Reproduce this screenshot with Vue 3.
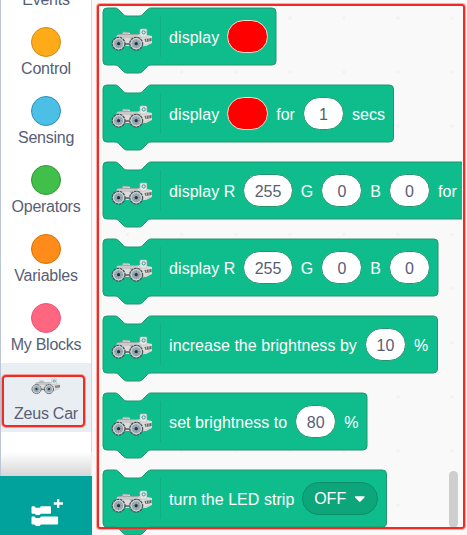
<script setup>
import { h } from 'vue'

const categories = [
  { name: 'Events', color: '#ffbf00', edge: '#cc9900' },
  { name: 'Control', color: '#ffab19', edge: '#cf8b17' },
  { name: 'Sensing', color: '#4cbfe6', edge: '#2e8eb8' },
  { name: 'Operators', color: '#40bf4a', edge: '#389438' },
  { name: 'Variables', color: '#ff8c1a', edge: '#db6e00' },
  { name: 'My Blocks', color: '#ff6680', edge: '#f0527a' },
]

const text = (value) => ({ type: 'text', value })
const num = (value) => ({ type: 'num', value })
const color = { type: 'color' }

const blocks = [
  { width: 173, parts: [text('display'), color] },
  { width: 290.5, parts: [text('display'), color, text('for'), num('1'), text('secs')] },
  { width: 480, parts: [text('display R'), num('255'), text('G'), num('0'), text('B'), num('0'), text('for')] },
  { width: 335, parts: [text('display R'), num('255'), text('G'), num('0'), text('B'), num('0')] },
  { width: 334.5, parts: [text('increase the brightness by'), num('10'), text('%')] },
  { width: 264, parts: [text('set brightness to'), num('80'), text('%')] },
  { width: 283.5, parts: [text('turn the LED strip'), { type: 'menu', value: 'OFF' }] },
]

const outline = (w) =>
  `M0 4A4 4 0 0 1 4 0H12c2 0 3 1 4 2l4 4c1 1 2 2 4 2h12c2 0 3-1 4-2l4-4c1-1 2-2 4-2H${w - 4}a4 4 0 0 1 4 4V53a4 4 0 0 1-4 4H48c-2 0-3 1-4 2l-4 4c-1 1-2 2-4 2H24c-2 0-3-1-4-2l-4-4c-1-1-2-2-4-2H4a4 4 0 0 1-4-4Z`

const wheel = (cx) => [
  h('circle', { cx, cy: 15.7, r: 6.4, fill: '#a9b8be', stroke: '#4c5554', 'stroke-width': 1.3, 'stroke-dasharray': '2.6 0.8' }),
  h('circle', { cx, cy: 15.7, r: 5.1, fill: '#9dafb8', stroke: '#d3dade', 'stroke-width': 1 }),
  h('path', { d: `M${cx - 4} 15.7h8M${cx} 11.7v8M${cx - 3} 12.7l6 6M${cx + 3} 12.7l-6 6`, stroke: '#7b8e99', 'stroke-width': 0.7 }),
  h('circle', { cx, cy: 15.7, r: 1.6, fill: '#29333a' }),
]

const Car = () =>
  h('svg', { viewBox: '0 0 42 24', fill: 'none' }, [
    h('path', { d: 'M6 7l6-1v-2h5l2 1v2l10-1V2l6-1 1 6 5 1v7l-6 3H9L5 12Z', fill: '#dedcdb' }),
    h('path', { d: 'M6 7l11-1 10 1v3H6ZM12 4h5l1 3h-7Z', fill: '#c9c9ca' }),
    h('path', { d: 'M7 6.5h21M12 4l6 .5M19 10h11', stroke: '#989c9e', 'stroke-width': 0.7 }),
    h('rect', { x: 29, y: 1, width: 6.8, height: 8, rx: 1, fill: '#e4e8e7', stroke: '#b4bcbb', 'stroke-width': 0.6 }),
    h('circle', { cx: 32.7, cy: 4.4, r: 1.6, fill: '#d7f1f5', stroke: '#438f9c', 'stroke-width': 1 }),
    h('path', { d: 'M33.5 11l7-1v3l-6 1Z', fill: '#686664' }),
    h('path', { d: 'M35.5 10.5v3M38 10v3M32 18l7-3', stroke: '#d2cfca', 'stroke-width': 0.8 }),
    h('path', { d: 'M13 16h7', stroke: '#777b7b', 'stroke-width': 2 }),
    ...wheel(7.6),
    ...wheel(25.2),
  ])
</script>

<template>
  <div class="editor">
    <aside class="sidebar">
      <nav class="categories">
        <div v-for="c in categories" :key="c.name" class="category">
          <span class="bubble" :style="{ background: c.color, borderColor: c.edge }"></span>
          <span class="label">{{ c.name }}</span>
        </div>
        <div class="category selected">
          <Car class="category-car" />
          <span class="label">Zeus Car</span>
        </div>
      </nav>
      <div class="fade"></div>
      <button class="extensions" aria-label="Add extension">
        <svg width="34" height="30" viewBox="0 0 34 30" fill="#fff">
          <path d="M1.5 8.2q0-1 1-1h2l1.2 1.6h4l1.2-1.6H20q1 0 1 1v5.5q0 1-1 1h-9.2l-1.5 1.3H6.2l-1.5-1.3H2.5q-1 0-1-1Z" />
          <path d="M1.5 18.5q0-1 1-1h2l1.3 1.4h4l1.3-1.4h16q1 0 1 1v6q0 1-1 1H11L9.5 27H6l-1.5-1.5h-2q-1 0-1-1Z" />
          <path d="M27 0h2.3v3.3H33v2.5h-3.7V9H27V5.8h-3.2V3.3H27Z" />
        </svg>
      </button>
      <div class="mark mark-category"></div>
    </aside>

    <main class="flyout">
      <div v-for="(b, i) in blocks" :key="i" class="block" :style="{ width: b.width + 'px' }">
        <svg class="shape" :width="b.width" height="66">
          <path :d="outline(b.width)" />
        </svg>
        <div class="content">
          <Car class="block-car" />
          <span class="divider"></span>
          <template v-for="(p, j) in b.parts" :key="j">
            <span v-if="p.type === 'text'" class="word">{{ p.value }}</span>
            <span v-else-if="p.type === 'color'" class="pill color"></span>
            <span v-else-if="p.type === 'num'" class="pill num" :class="{ wide: p.value.length > 2 }">{{ p.value }}</span>
            <span v-else class="pill menu">
              {{ p.value }}
              <svg width="12" height="8" viewBox="0 0 12 8"><path d="M1.7 1.2h8.2q1.4 0 .5 1.2L6.8 6.2q-1 1-2 0L1.2 2.4Q.3 1.2 1.7 1.2Z" fill="#fff" /></svg>
            </span>
          </template>
        </div>
      </div>
    </main>
    <div class="scrollbar"></div>
    <div class="mark mark-flyout"></div>
  </div>
</template>

<style>
body {
  margin: 0;
  overflow: hidden;
}
</style>

<style scoped>
.editor {
  position: relative;
  display: flex;
  width: 467px;
  height: 535px;
  overflow: hidden;
  box-sizing: border-box;
  background: #f9f9f9;
  font: 16px/20px "Liberation Sans", Arial, sans-serif;
}
.sidebar {
  position: relative;
  display: flex;
  flex-direction: column;
  flex: none;
  width: 92px;
  height: 535px;
  background: #fff;
}
.categories {
  display: flex;
  flex-direction: column;
  height: 452px;
  border-left: 1px solid #bec5d5;
  border-right: 1px solid #d5d7db;
  justify-content: flex-end;
  box-sizing: border-box;
  padding-bottom: 20px;
}
.category {
  display: flex;
  flex: none;
  flex-direction: column;
  align-items: center;
  height: 69px;
  padding-top: 9px;
  box-sizing: border-box;
}
.bubble {
  width: 30px;
  height: 30px;
  border: 1px solid;
  border-radius: 50%;
  box-sizing: border-box;
}
.label {
  margin-top: 2px;
  color: #575e75;
  letter-spacing: -0.25px;
  white-space: nowrap;
}
.selected {
  background: #e9eef2;
}
.category-car {
  width: 30px;
  height: 17px;
  margin: 6px 0 7px;
}
.fade {
  height: 24px;
  border-left: 1px solid #bec5d5;
  border-right: 1px solid #eee;
  background: linear-gradient(#fff, #d6d6d6);
}
.extensions {
  display: flex;
  flex: 1;
  align-items: flex-start;
  justify-content: center;
  padding: 23px 0 0 1px;
  border: 0;
  background: #00a29b;
}
.flyout {
  display: flex;
  flex: none;
  flex-direction: column;
  gap: 20px;
  width: 370px;
  height: 535px;
  padding: 8px 0 0 11px;
  overflow: hidden;
  box-sizing: border-box;
  background-image: radial-gradient(circle, #f1f1f1 1.2px, transparent 1.7px);
  background-size: 54.1px 54.1px;
  background-position: 8.5px -9px;
}
.block {
  position: relative;
  flex: none;
  height: 57px;
}
.shape {
  position: absolute;
  inset: 0 auto auto 0;
  overflow: visible;
}
.shape path {
  fill: #0fbd8c;
  stroke: #25946f;
  stroke-width: 1;
}
.content {
  position: relative;
  display: flex;
  align-items: center;
  height: 57px;
  padding-left: 8px;
  gap: 8.1px;
}
.block-car {
  flex: none;
  width: 42px;
  height: 24px;
  margin-top: 6px;
}
.divider {
  width: 1px;
  height: 41px;
  margin: 0 0 0 -1.1px;
  background: #0eb083;
}
.word {
  color: #fff;
  letter-spacing: 0.04px;
  white-space: nowrap;
  padding-top: 2px;
}
.pill {
  display: flex;
  flex: none;
  align-items: center;
  justify-content: center;
  width: 40.8px;
  height: 33px;
  border: 1px solid #25946f;
  border-radius: 17px;
  box-sizing: border-box;
}
.color {
  border-color: #f6dfd6;
  background: #f00;
}
.num {
  padding-top: 2px;
  background: #fff;
  color: #575e75;
}
.wide {
  width: 49.4px;
}
.menu {
  gap: 8px;
  width: 75.5px;
  border-color: #0b8e69;
  background: #0da57a;
  color: #fff;
}
.scrollbar {
  position: absolute;
  left: 449px;
  top: 471px;
  width: 9px;
  height: 57px;
  border-radius: 5px;
  background: #cecece;
}
.mark {
  position: absolute;
  box-sizing: border-box;
  border: 2px solid #ef2b22;
  box-shadow: 0 0 0 1px rgba(255, 70, 60, 0.45);
}
.mark-category {
  left: 2px;
  top: 375px;
  width: 83px;
  height: 52px;
  border-radius: 4px;
}
.mark-flyout {
  left: 97px;
  top: 4px;
  width: 368px;
  height: 525px;
  border-radius: 3px;
}
</style>
